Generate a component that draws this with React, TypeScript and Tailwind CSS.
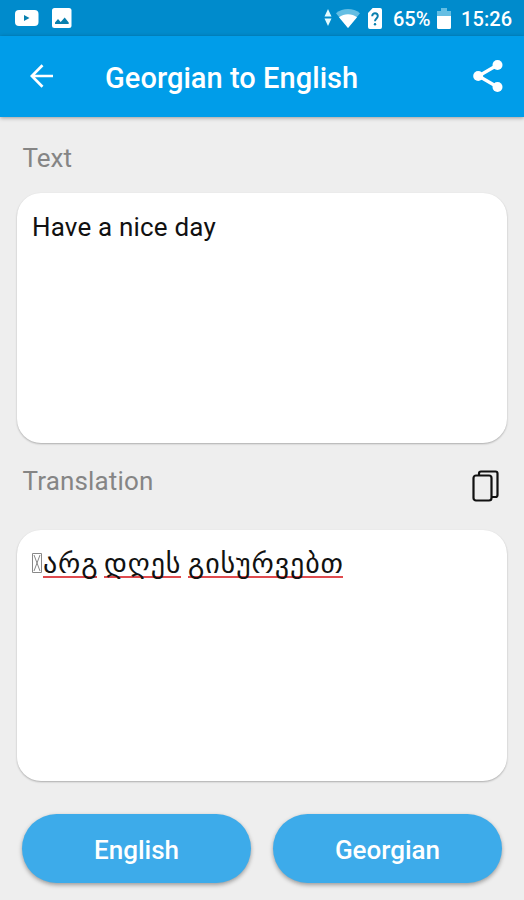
import React from "react";

const words = [
  { text: "არგ", box: "w-[54px]" },
  { text: "დღეს", box: "w-[77px]" },
  { text: "გისურვებთ", box: "w-[155px]" },
];

function StatusBar() {
  return (
    <div className="flex h-9 items-center bg-[#008bcc] pl-[15px] pr-[11px] text-white">
      <svg width="24" height="18" viewBox="0 0 24 18">
        <rect x="0" y="1" width="23.5" height="16" rx="4" fill="white" />
        <path d="M9 6v6l5.500-3z" fill="#087fae" />
      </svg>
      <svg className="ml-[13px]" width="20" height="20" viewBox="0 0 20 20">
        <rect width="19.5" height="20" rx="2.5" fill="white" />
        <path d="M3 16v-1.500l3-3.500 2.700 3 4-4.500 4 5V16z" fill="#087fae" />
      </svg>
      <div className="grow" />
      <svg width="8" height="18" viewBox="0 0 8 18">
        <path d="M4 0l3.500 7.500h-7z" fill="#e1fbff" />
        <path d="M4 17L.5 9.500h7z" fill="#e1fbff" />
      </svg>
      <svg className="ml-[4px]" width="24" height="19" viewBox="0 0 24 19">
        <path d="M12 19L0 4.200C7-1.400 17-1.400 24 4.200z" fill="#65bee3" />
        <path d="M12 19L3 8.200c5-4 13-4 18 0z" fill="white" />
      </svg>
      <svg className="ml-[8px]" width="14" height="21" viewBox="0 0 15 21" preserveAspectRatio="none">
        <path d="M5 0h8a2 2 0 012 2v17a2 2 0 01-2 2H2a2 2 0 01-2-2V5z" fill="white" />
        <path d="M4.500 8.200c0-4 6-3.800 6-.2 0 2.300-3 2.600-3 5.200" fill="none" stroke="#087fae" strokeWidth="2.1" />
        <circle cx="7.5" cy="16.3" r="1.3" fill="#087fae" />
      </svg>
      <span className="ml-[11px] mt-[2px] w-[39px] whitespace-nowrap text-[20px] font-medium leading-6">65%</span>
      <svg className="ml-[5px]" width="14" height="21" viewBox="0 0 14 21">
        <path d="M0 3h4V0h6v3h4v5H0z" fill="#65bee3" />
        <path d="M0 8h14v11.500a1.500 1.500 0 01-1.500 1.500h-11A1.500 1.500 0 010 19.500z" fill="white" />
      </svg>
      <span className="ml-[10px] mt-[2px] w-[52px] whitespace-nowrap text-[20px] font-medium leading-6 tracking-[0.1px]">15:26</span>
    </div>
  );
}

function Header() {
  return (
    <header className="relative flex h-[81px] items-center bg-[#009de9] pl-[30px] pr-[20px] text-white shadow-[0_1px_4px_rgba(0,0,0,0.35)]">
      <svg className="-mt-[1px]" width="24" height="24" viewBox="0 0 24 24" fill="none" stroke="white" strokeWidth="2.7">
        <path d="M12.500 1.200L1.800 12l10.700 10.800M2 12h21" />
      </svg>
      <h1 className="ml-[51px] mt-[3px] grow whitespace-nowrap text-[29px] font-medium leading-8 tracking-[0.05px]">Georgian to English</h1>
      <svg className="-mt-[1px]" width="32" height="34" viewBox="0 0 32 34">
        <path d="M25.500 6L6.500 17l19 11" fill="none" stroke="white" strokeWidth="3.3" />
        <circle cx="25.5" cy="6" r="5" fill="white" />
        <circle cx="6.2" cy="17" r="5" fill="white" />
        <circle cx="25.5" cy="28" r="5" fill="white" />
      </svg>
    </header>
  );
}

function MissingGlyph() {
  return (
    <svg className="mt-[9px] shrink-0" width="11" height="20" viewBox="0 0 11 20" fill="none" stroke="#888" strokeWidth="1">
      <path d="M.5.5h9v19h-9zM2 2l6 16M8 2L2 18" />
    </svg>
  );
}

const card = "mx-[17px] rounded-[24px] bg-white px-[15px] shadow-[0_1px_2px_rgba(0,0,0,0.28)]";
const button = "h-[69px] w-[229px] rounded-full bg-[#3dabea] pt-[3px] text-[26px] font-medium text-white shadow-[0_2px_4px_rgba(0,0,0,0.35)]";

export default function App() {
  return (
    <main className="h-[900px] w-[524px] overflow-hidden bg-[#eeeeee] font-[Roboto,sans-serif]">
      <StatusBar />
      <Header />
      <div className="h-[76px] pl-[22.5px] pt-[25px] text-[26px] leading-8 text-[#858585]">Text</div>
      <section className={`${card} h-[250px]`}>
        <p className="pt-[18px] text-[26px] leading-8 tracking-[0.18px] text-[#111]">Have a nice day</p>
      </section>
      <div className="flex h-[87px] justify-between pl-[22.5px] pr-[24px]">
        <span className="pt-[22px] text-[26px] leading-8 tracking-[0.15px] text-[#858585]">Translation</span>
        <svg className="mt-[27px]" width="28" height="32" viewBox="0 0 28 32" fill="none" stroke="#111" strokeWidth="2.2">
          <path d="M7 5V3.500a2 2 0 012-2h14.500a2 2 0 012 2V25a2 2 0 01-2 2H20" />
          <rect x="1.500" y="5.500" width="18" height="25" rx="2.500" />
        </svg>
      </div>
      <section className={`${card} h-[251px]`}>
        <div className="flex pt-[14px]">
          <MissingGlyph />
          <p className="flex gap-[7px] font-['DejaVu_Sans',sans-serif] text-[28px] leading-[39px] tracking-[0.9px] text-[#111]">
            {words.map((word) => (
              <span key={word.text} className={`${word.box} h-[34px] whitespace-nowrap border-b-[2.5px] border-[#df4a4e]`}>{word.text}</span>
            ))}
          </p>
        </div>
      </section>
      <div className="mt-[33px] flex gap-[22px] pl-[22px]">
        <button className={button}>English</button>
        <button className={button}>Georgian</button>
      </div>
    </main>
  );
}
